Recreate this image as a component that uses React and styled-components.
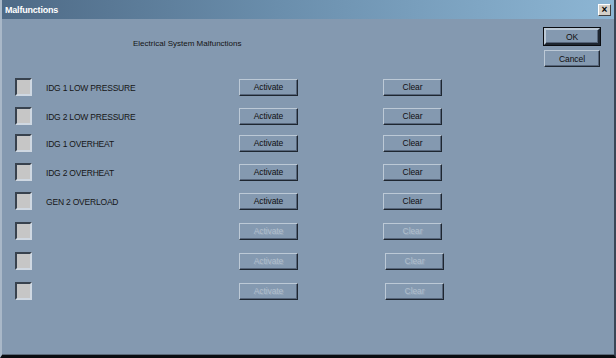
import React from 'react';
import styled, { createGlobalStyle } from 'styled-components';

const GlobalStyle = createGlobalStyle`
  html, body {
    margin: 0;
    padding: 0;
    background: #000;
    overflow: hidden;
  }
`;

const Window = styled.div`
  width: 616px;
  height: 358px;
  box-sizing: border-box;
  display: flex;
  flex-direction: column;
  background: #8499b0;
  border-left: 2px solid #a9b8c8;
  border-right: 2px solid #3a4656;
  border-bottom: 3px solid #0a0c10;
  font-family: "Liberation Sans", Arial, sans-serif;
`;

const TitleBar = styled.div`
  height: 19px;
  flex: none;
  display: flex;
  align-items: center;
  justify-content: space-between;
  padding: 0 3px 0 3px;
  background: linear-gradient(to right, #4e6a86 0%, #6a8eac 45%, #8db6d4 100%);
`;

const TitleText = styled.span`
  color: #fff;
  font-weight: bold;
  font-size: 9px;
  letter-spacing: -0.2px;
`;

const CloseButton = styled.div`
  width: 13px;
  height: 12px;
  box-sizing: border-box;
  background: #d4d0c8;
  border: 1px solid;
  border-color: #fff #404040 #404040 #fff;
  display: flex;
  align-items: center;
  justify-content: center;
  font-size: 10px;
  font-weight: bold;
  line-height: 1;
  color: #000;
`;

const Body = styled.div`
  flex: 1;
  display: flex;
  flex-direction: column;
  padding: 9px 14px 0 13px;
  border-bottom: 1px solid #5a6878;
`;

const TopArea = styled.div`
  display: flex;
  justify-content: space-between;
  align-items: flex-start;
`;

const Heading = styled.div`
  margin: 11px 0 0 118px;
  font-size: 8px;
  color: #141414;
`;

const DialogButtons = styled.div`
  display: flex;
  flex-direction: column;
  gap: 5px;
`;

const Button = styled.button`
  width: ${({ width }) => width || 59}px;
  height: 17px;
  box-sizing: border-box;
  margin: 0;
  margin-left: ${({ shift }) => shift || 0}px;
  padding: 0;
  background: #8499b0;
  border: 1px solid;
  border-color: #bcc9d6 #1e2630 #1e2630 #bcc9d6;
  box-shadow: inset -1px -1px 0 #56657a;
  font-family: "Liberation Sans", Arial, sans-serif;
  font-size: 8.5px;
  letter-spacing: -0.1px;
  color: ${({ disabled }) => (disabled ? '#b2bfcd' : '#101010')};
  text-shadow: ${({ disabled }) => (disabled ? '1px 1px 0 #95a8bc' : 'none')};
  cursor: default;
`;

const DefaultButton = styled(Button)`
  outline: 1px solid #0a0c10;
  outline-offset: 0;
  border-width: 2px;
  border-color: #bcc9d6 #1e2630 #1e2630 #bcc9d6;
`;

const Rows = styled.div`
  display: flex;
  flex-direction: column;
  margin-top: 11px;
`;

const Row = styled.div`
  display: grid;
  grid-template-columns: 17px 207px 59px 85px auto;
  align-items: center;
  height: 17px;
  margin-top: ${({ space }) => space}px;
`;

const CheckBox = styled.div`
  width: 17px;
  height: 18px;
  box-sizing: border-box;
  border: 2px solid;
  border-color: #38424e #cfd8e2 #cfd8e2 #38424e;
  background: #c6c6c6;
`;

const Label = styled.span`
  padding-left: 14px;
  padding-top: 2px;
  font-size: 8.5px;
  letter-spacing: -0.2px;
  color: #161616;
`;

const rows = [
  { label: 'IDG 1 LOW PRESSURE', space: 0 },
  { label: 'IDG 2 LOW PRESSURE', space: 12 },
  { label: 'IDG 1 OVERHEAT', space: 10 },
  { label: 'IDG 2 OVERHEAT', space: 12 },
  { label: 'GEN 2 OVERLOAD', space: 12 },
  { label: '', space: 13 },
  { label: '', space: 13, shift: 2 },
  { label: '', space: 13, shift: 2 },
];

const App = () => (
  <>
    <GlobalStyle />
    <Window>
      <TitleBar>
        <TitleText>Malfunctions</TitleText>
        <CloseButton>×</CloseButton>
      </TitleBar>
      <Body>
        <TopArea>
          <Heading>Electrical System Malfunctions</Heading>
          <DialogButtons>
            <DefaultButton width={56}>OK</DefaultButton>
            <Button width={56}>Cancel</Button>
          </DialogButtons>
        </TopArea>
        <Rows>
          {rows.map((row, i) => (
            <Row key={i} space={row.space}>
              <CheckBox />
              <Label>{row.label}</Label>
              <Button disabled={!row.label}>Activate</Button>
              <span />
              <Button disabled={!row.label} shift={row.shift}>Clear</Button>
            </Row>
          ))}
        </Rows>
      </Body>
    </Window>
  </>
);

export default App;
